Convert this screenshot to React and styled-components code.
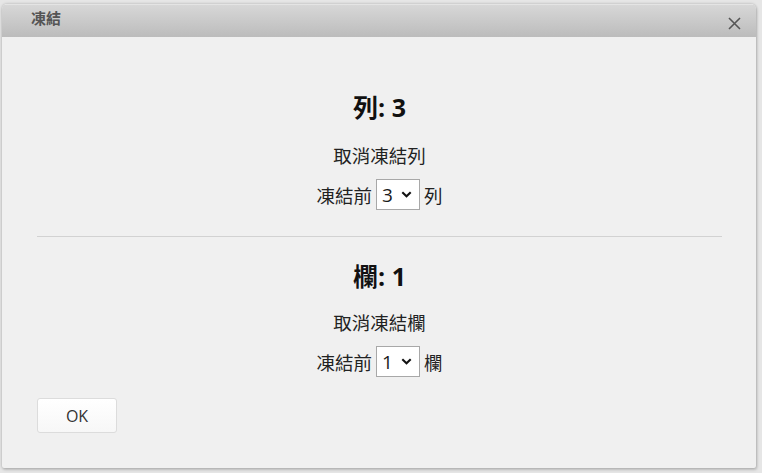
import React from "react";
import styled, { createGlobalStyle } from "styled-components";

const GlobalStyle = createGlobalStyle`
  html, body {
    margin: 0;
    padding: 0;
    background: #e6e6e6;
    font-family: "Open Sans", "Noto Sans CJK TC", sans-serif;
  }
`;

const Page = styled.div`
  width: 762px;
  height: 473px;
  box-sizing: border-box;
  padding: 4px 6px 5px 2px;
`;

const Dialog = styled.div`
  width: 754px;
  height: 464px;
  display: flex;
  flex-direction: column;
  background: #f0f0f0;
  border-radius: 5px 5px 2px 2px;
  box-shadow: 0 0 3px rgba(0, 0, 0, 0.25), 1px 2px 3px rgba(0, 0, 0, 0.15);
  overflow: hidden;
`;

const TitleBar = styled.div`
  height: 33px;
  flex-shrink: 0;
  display: flex;
  align-items: center;
  justify-content: space-between;
  padding: 0 14px 0 29px;
  background: linear-gradient(#d7d7d7, #bcbcbc);
  border-top: 1px solid #e4e4e4;
  box-sizing: border-box;
`;

const Title = styled.div`
  font-size: 15px;
  font-weight: 700;
  color: #555;
  margin-top: -8px;
`;

const CloseButton = styled.button`
  background: none;
  border: none;
  padding: 0;
  width: 16px;
  height: 16px;
  display: flex;
  align-items: center;
  justify-content: center;
  cursor: pointer;
  margin-top: 4px;
`;

const Body = styled.div`
  flex: 1;
  display: flex;
  flex-direction: column;
  padding: 55px 34px 0 35px;
`;

const Section = styled.div`
  display: flex;
  flex-direction: column;
  align-items: center;
`;

const Heading = styled.div`
  font-size: 25px;
  font-weight: 700;
  line-height: 30px;
  color: #111;
`;

const Label = styled.div`
  font-size: 18.5px;
  line-height: 24px;
  color: #222;
  margin-top: ${(p) => p.$gap}px;
`;

const Row = styled.div`
  display: flex;
  align-items: center;
  gap: 4px;
  margin-top: 11px;
  font-size: 18.5px;
  color: #222;
`;

const Select = styled.div`
  width: 44px;
  height: 31px;
  box-sizing: border-box;
  border: 1px solid #a8a8a8;
  background: #fff;
  display: flex;
  align-items: center;
  justify-content: space-between;
  padding: 0 7px 0 5px;
  font-size: 19px;
  font-weight: 400;
  color: #1a1a1a;
`;

const Divider = styled.div`
  height: 1px;
  background: #d2d2d2;
  margin: 26px 0 24px;
`;

const Footer = styled.div`
  margin-top: 21px;
`;

const OkButton = styled.button`
  width: 80px;
  height: 35px;
  border: 1px solid #dcdcdc;
  border-radius: 3px;
  background: linear-gradient(#ffffff, #f7f7f7);
  font-family: "Open Sans", sans-serif;
  font-size: 16px;
  color: #333;
  cursor: pointer;
`;

const Chevron = () => (
  <svg width="11" height="7" viewBox="0 0 11 7">
    <path d="M1.3 1.3 L5.5 5.3 L9.7 1.3" fill="none" stroke="#111" strokeWidth="2.1" />
  </svg>
);

const FreezeSection = ({ title, unfreeze, unit, value, gap }) => (
  <Section>
    <Heading>{title}</Heading>
    <Label $gap={gap}>{unfreeze}</Label>
    <Row>
      <span>凍結前</span>
      <Select>
        <span>{value}</span>
        <Chevron />
      </Select>
      <span>{unit}</span>
    </Row>
  </Section>
);

export default function App() {
  return (
    <Page>
      <GlobalStyle />
      <Dialog>
        <TitleBar>
          <Title>凍結</Title>
          <CloseButton>
            <svg width="13" height="13" viewBox="0 0 13 13">
              <path d="M1 1 L12 12 M12 1 L1 12" stroke="#555" strokeWidth="1.6" />
            </svg>
          </CloseButton>
        </TitleBar>
        <Body>
          <FreezeSection title="列: 3" unfreeze="取消凍結列" unit="列" value="3" gap={22} />
          <Divider />
          <FreezeSection title="欄: 1" unfreeze="取消凍結欄" unit="欄" value="1" gap={20} />
          <Footer>
            <OkButton>OK</OkButton>
          </Footer>
        </Body>
      </Dialog>
    </Page>
  );
}
